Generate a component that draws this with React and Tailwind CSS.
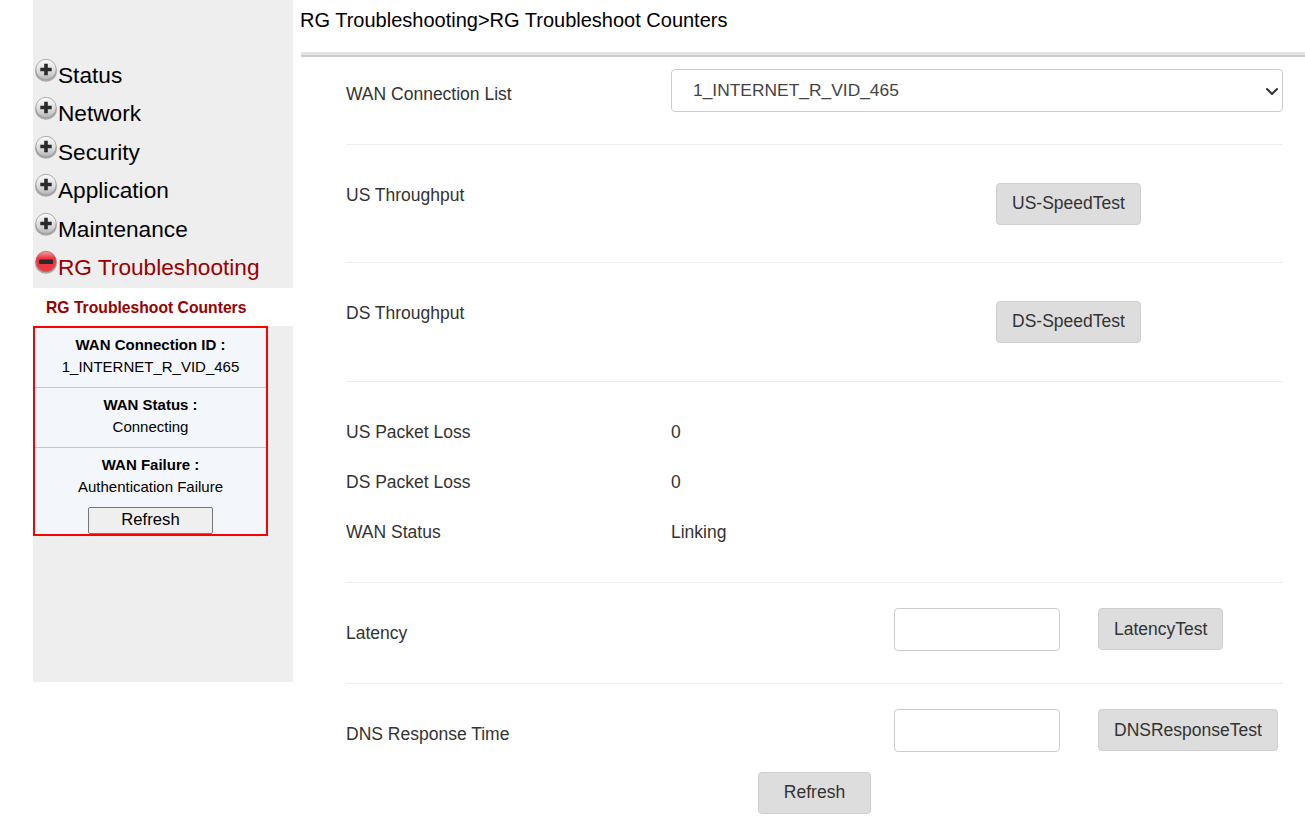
import React from "react";

function MenuIcon({ open, id }) {
  return (
    <svg width="24" height="25" viewBox="0 0 24 25" className="shrink-0">
      <defs>
        <linearGradient id={id} x1="0" y1="0" x2="0" y2="1">
          {open ? (
            <>
              <stop offset="0" stopColor="#f4a0a6" />
              <stop offset="0.35" stopColor="#f0303c" />
              <stop offset="1" stopColor="#ee3a44" />
            </>
          ) : (
            <>
              <stop offset="0" stopColor="#fbfbfb" />
              <stop offset="0.6" stopColor="#dcdcde" />
              <stop offset="1" stopColor="#b4b4b8" />
            </>
          )}
        </linearGradient>
      </defs>
      <ellipse cx="12" cy="13.5" rx="10.8" ry="10.3" fill="#a8a8a8" />
      <circle cx="12" cy="11.5" r="10.2" fill={`url(#${id})`} stroke={open ? "#b5666b" : "#9b9b9b"} strokeWidth="0.8" />
      {open ? (
        <rect x="5" y="9.5" width="14" height="4.5" rx="1" fill="#2a2a2a" />
      ) : (
        <path d="M10.2 5.800h3.600v3.900h3.900v3.600h-3.900v3.900h-3.600v-3.900H6.300V9.700h3.900z" fill="#2a2a2a" />
      )}
    </svg>
  );
}

function MenuItem({ label, open, id }) {
  return (
    <div className={`flex items-start h-[38.5px] text-[22.67px] leading-[38px] ${open ? "text-[#990000]" : "text-black"}`}>
      <span className="mt-[2px] ml-[0.5px]"><MenuIcon open={open} id={id} /></span>
      <span className="ml-[0.5px]">{label}</span>
    </div>
  );
}

function Info({ title, value, border }) {
  return (
    <div className={`h-[60px] pt-[6px] text-center text-[15px] leading-[22px] text-black ${border ? "border-b border-[#c8c8cc]" : ""}`}>
      <div className="font-bold">{title}</div>
      <div>{value}</div>
    </div>
  );
}

function Btn({ children, className = "" }) {
  return (
    <button className={`h-[42px] rounded-[4px] border border-[#cfcfcf] bg-[#dddddd] px-[15px] text-[17.5px] leading-none text-[#333] ${className}`}>
      {children}
    </button>
  );
}

function Row({ label, children, height }) {
  return (
    <div className={`flex ${height} border-b border-[#eeeeee]`}>
      <div className="w-[325px] shrink-0 text-[17.5px] leading-[24px] text-[#333]">{label}</div>
      <div className="flex-1 relative">{children}</div>
    </div>
  );
}

export default function App() {
  return (
    <div className="flex w-[1305px] h-[825px] overflow-hidden bg-white pl-[33px] font-['Liberation_Sans',Arial,sans-serif]">
      <aside className="w-[260px] h-[682px] shrink-0 bg-[#eeeeee]">
        <div className="pt-[55.5px] h-[288px]">
          <MenuItem label="Status" id="g1" />
          <MenuItem label="Network" id="g2" />
          <MenuItem label="Security" id="g3" />
          <MenuItem label="Application" id="g4" />
          <MenuItem label="Maintenance" id="g5" />
          <MenuItem label="RG Troubleshooting" open id="g6" />
        </div>
        <div className="h-[38px] bg-white pl-[13px] text-[15.7px] font-bold leading-[39px] text-[#990000]">
          RG Troubleshoot Counters
        </div>
        <div className="h-[210px] w-[235px] border-2 border-[#ff0000] bg-[#f3f6fb]">
          <Info title="WAN Connection ID :" value="1_INTERNET_R_VID_465" border />
          <Info title="WAN Status :" value="Connecting" border />
          <Info title="WAN Failure :" value="Authentication Failure" />
          <div className="flex justify-center">
            <button className="-mt-[1px] h-[27px] w-[125px] rounded-[2px] border border-[#767676] bg-[#efefef] text-[16.67px] leading-none text-black">
              Refresh
            </button>
          </div>
        </div>
      </aside>
      <main className="ml-[8px] flex-1">
        <h1 className="h-[52px] pt-[8px] -ml-[1px] text-[20px] leading-[24px] font-normal text-black">
          RG Troubleshooting&gt;RG Troubleshoot Counters
        </h1>
        <div className="h-[5px] bg-[#e4e4e4] border-b-2 border-[#cccccc]" />
        <div className="ml-[45px] mr-[22px]">
          <div className="h-[88px] flex border-b border-[#eeeeee]">
            <div className="w-[325px] pt-[25px] text-[17.5px] leading-[24px] text-[#333]">WAN Connection List</div>
            <div className="relative mt-[12px] h-[43px] flex-1">
              <select className="h-[43px] w-full appearance-none rounded-[4px] border border-[#cccccc] bg-white pl-[21px] text-[17.4px] text-[#444]">
                <option>1_INTERNET_R_VID_465</option>
              </select>
              <svg className="pointer-events-none absolute right-[4px] top-[15px]" width="14" height="14" viewBox="0 0 14 14" fill="none" stroke="#333" strokeWidth="2" strokeLinecap="round" strokeLinejoin="round">
                <path d="M2 5l5 5 5-5" />
              </svg>
            </div>
          </div>
          <Row label="US Throughput" height="h-[118px] pt-[38px]">
            <Btn className="absolute left-[325px] top-0">US-SpeedTest</Btn>
          </Row>
          <Row label="DS Throughput" height="h-[119px] pt-[38px]">
            <Btn className="absolute left-[325px] top-0">DS-SpeedTest</Btn>
          </Row>
          <div className="h-[201px] pt-[38px] border-b border-[#eeeeee] text-[17.5px] leading-[24px] text-[#333]">
            <div className="flex h-[50px]"><div className="w-[325px]">US Packet Loss</div><div>0</div></div>
            <div className="flex h-[50px]"><div className="w-[325px]">DS Packet Loss</div><div>0</div></div>
            <div className="flex h-[50px]"><div className="w-[325px]">WAN Status</div><div>Linking</div></div>
          </div>
          <div className="flex h-[101px] pt-[25px] border-b border-[#eeeeee]">
            <div className="w-[548px] pt-[13px] text-[17.5px] leading-[24px] text-[#333]">Latency</div>
            <input className="h-[43px] w-[166px] rounded-[4px] border border-[#cccccc] bg-white" />
            <Btn className="ml-[38px] pt-[2px]">LatencyTest</Btn>
          </div>
          <div className="flex h-[88px] pt-[25px]">
            <div className="w-[548px] pt-[13px] text-[17.5px] leading-[24px] text-[#333]">DNS Response Time</div>
            <input className="h-[43px] w-[166px] rounded-[4px] border border-[#cccccc] bg-white" />
            <Btn className="ml-[38px] pt-[2px]">DNSResponseTest</Btn>
          </div>
          <div className="flex pl-[412px]">
            <Btn className="w-[113px]">Refresh</Btn>
          </div>
        </div>
      </main>
    </div>
  );
}
